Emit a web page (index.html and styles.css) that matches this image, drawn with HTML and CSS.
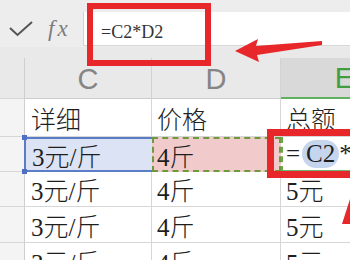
FILE: index.html
```html
<!DOCTYPE html>
<html>
<head>
<meta charset="utf-8">
<link rel="stylesheet" href="styles.css">
</head>
<body>
<div class="app">
  <div class="fbar">
    <div class="tools">
      <svg class="check" width="24" height="16" viewBox="0 0 24 16"><path d="M1 7 L8.5 14 L23 1" fill="none" stroke="#555" stroke-width="2"/></svg>
      <span class="fx">fx</span>
    </div>
    <div class="input">=C2*D2</div>
  </div>
  <div class="spacer"></div>
  <div class="grid">
    <div class="rn head"></div>
    <div class="ch">C</div>
    <div class="ch">D</div>
    <div class="ch ech">E</div>

    <div class="rn"></div>
    <div class="cell c">详细</div>
    <div class="cell">价格</div>
    <div class="cell">总额</div>

    <div class="rn"></div>
    <div class="cell c csel">3元/斤<span class="handle h1"></span><span class="handle h2"></span></div>
    <div class="cell dsel">4斤</div>
    <div class="cell esel">=<span class="ref">C2</span>*D2</div>

    <div class="rn"></div>
    <div class="cell c">3元/斤</div>
    <div class="cell">4斤</div>
    <div class="cell">5元</div>

    <div class="rn"></div>
    <div class="cell c">3元/斤</div>
    <div class="cell">4斤</div>
    <div class="cell">5元</div>

    <div class="rn"></div>
    <div class="cell c">3元/斤</div>
    <div class="cell">4斤</div>
    <div class="cell">5元</div>
  </div>

  <div class="mark mark1"></div>
  <div class="mark mark2"></div>
  <svg class="arrows" width="350" height="260" viewBox="0 0 350 260">
    <polygon points="235,51 258,39 256,46 322,41 322,45 257,55 259,62" fill="#e8272b"/>
    <polygon points="351,196 342,224 351,224" fill="#e8272b"/>
  </svg>
</div>
</body>
</html>
```

FILE: styles.css
```css
html, body {
  margin: 0;
  padding: 0;
}
body {
  width: 350px;
  height: 260px;
  overflow: hidden;
  background: #ffffff;
}
.app {
  position: relative;
  width: 350px;
  height: 260px;
  overflow: hidden;
  background: #ececec;
}
.fbar {
  display: flex;
  height: 47px;
  background: #ededed;
}
.tools {
  width: 83px;
  box-sizing: border-box;
  padding: 10px 0 0 9px;
  display: flex;
  align-items: center;
}
.check {
  display: block;
}
.fx {
  margin-left: 15px;
  font-family: "Liberation Serif", serif;
  font-style: italic;
  font-size: 23px;
  letter-spacing: 3px;
  color: #7d7d7d;
}
.input {
  flex: 1;
  margin-top: 12px;
  height: 34px;
  box-sizing: border-box;
  background: #ffffff;
  border-left: 1px solid #d2d2d2;
  border-bottom: 1px solid #d6d6d6;
  padding: 6px 0 0 17px;
  line-height: 28px;
  font-family: "Liberation Serif", serif;
  font-size: 18px;
  color: #333;
}
.spacer {
  height: 11px;
  background: #e9e9e9;
}
.grid {
  display: grid;
  grid-template-columns: 25px 127px 129px 128px;
  grid-template-rows: 41px 38px 35px 35px 36px 36px;
  width: 409px;
  background: #ffffff;
}
.rn {
  background: #f4f4f4;
  border-bottom: 1px solid #d6d6d6;
  border-right: 1px solid #cfcfcf;
}
.rn.head {
  background: #e9e9e9;
}
.ch {
  background: #e9e9e9;
  border-right: 1px solid #d2d2d2;
  border-bottom: 1px solid #cccccc;
  display: flex;
  align-items: center;
  justify-content: center;
  font-family: "Liberation Sans", sans-serif;
  font-size: 29px;
  color: #858585;
  padding-top: 2px;
  box-sizing: border-box;
}
.ech {
  background: #d9d9d9;
  color: #3f9e3f;
  border-bottom: 2px solid #5fb05f;
}
.cell {
  position: relative;
  box-sizing: border-box;
  border-right: 1px solid #d6d6d6;
  border-bottom: 1px solid #d6d6d6;
  padding-left: 5px;
  display: flex;
  align-items: center;
  white-space: nowrap;
  font-family: "Liberation Serif", "Noto Sans CJK SC", serif;
  font-size: 25px;
  font-weight: 300;
  color: #1e1e1e;
}
.cell.c {
  padding-left: 6px;
}
.csel {
  background: #dce3f4;
  border-top: 2px solid #5b7cc6;
  border-bottom: 2px solid #5b7cc6;
  border-left: 2px solid #5b7cc6;
  border-right: none;
  margin-left: -1px;
  padding-left: 5px;
}
.handle {
  position: absolute;
  left: -4px;
  width: 5px;
  height: 5px;
  background: #4e6fc2;
}
.h1 { top: -4px; }
.h2 { bottom: -4px; }
.dsel {
  background: #f1cbcb;
  border: 2px dashed #6f9a3c;
  padding-left: 3px;
}
.esel {
  border-left: 2px dashed #6aa84f;
  border-bottom: 2px solid #6cb86c;
  padding-left: 3px;
}
.ref {
  display: inline-block;
  margin-left: 2px;
  padding: 0 4px;
  height: 28px;
  line-height: 28px;
  border-radius: 14px;
  background: #c6d5ee;
}
.mark {
  position: absolute;
  box-sizing: border-box;
  border: 6px solid #e8272b;
}
.mark1 {
  left: 87px;
  top: 3px;
  width: 124px;
  height: 63px;
}
.mark2 {
  left: 267px;
  top: 129px;
  width: 100px;
  height: 49px;
  border-width: 7px;
}
.arrows {
  position: absolute;
  left: 0;
  top: 0;
}
```
